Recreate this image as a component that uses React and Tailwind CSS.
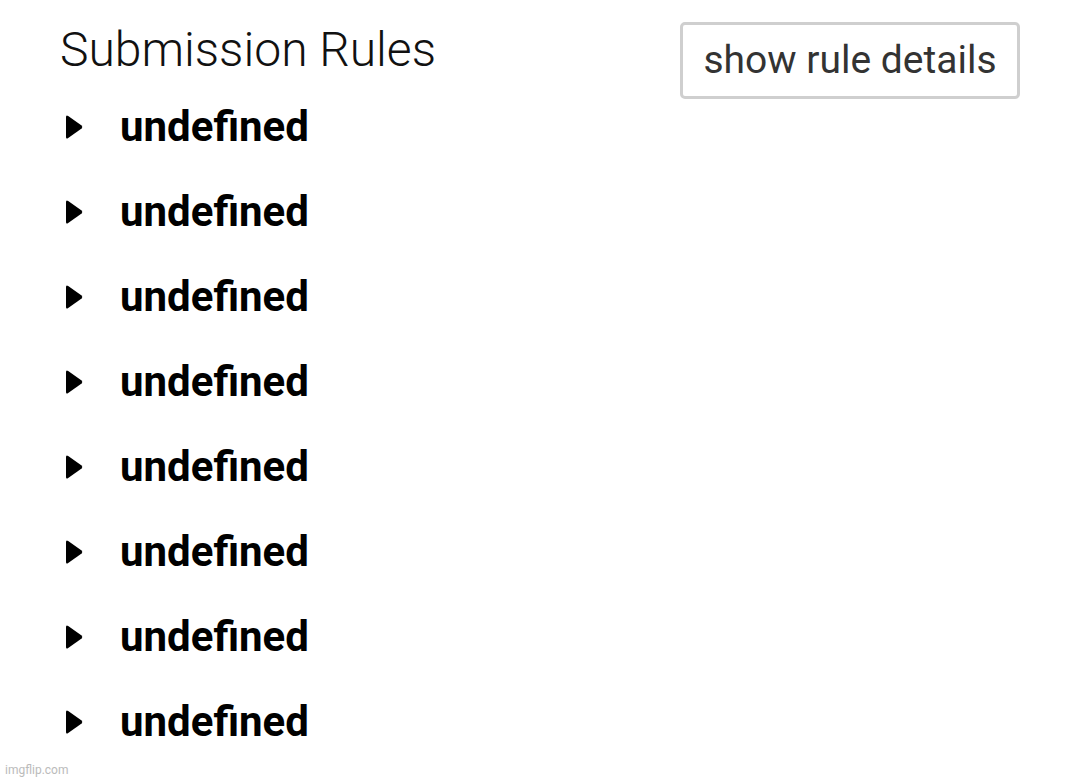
// Submission rules panel — a title, a "show rule details" toggle and a
// collapsed list of rules (each with a disclosure triangle).
const RULES = Array.from({ length: 8 }, (_, i) => ({ id: i, title: undefined }))

function Caret() {
  return (
    <svg width="18" height="26" viewBox="0 0 18 26" aria-hidden className="shrink-0">
      <path d="M1 3 Q1 0.6 3.2 2 L16.6 11.4 Q18 13 16.6 14.6 L3.2 24 Q1 25.4 1 23 Z" fill="#000" />
    </svg>
  )
}

export default function App() {
  return (
    <div
      className="relative h-[782px] w-[1080px] overflow-hidden bg-white"
      style={{ fontFamily: 'Roboto, "Liberation Sans", sans-serif' }}
    >
      <div className="flex items-start justify-between pl-[60px] pr-[60px] pt-[22px]">
        <h1 className="mt-[2px] text-[48px] font-light leading-[52px] text-[#111]">Submission Rules</h1>
        <button
          type="button"
          className="h-[77px] w-[340px] rounded-[5px] border-[3px] border-[#cfcfcf] bg-white text-[39px] text-[#333]"
        >
          show rule details
        </button>
      </div>

      <ul className="-mt-[15px] pl-[65px]">
        {RULES.map((r) => (
          <li key={r.id} className="flex h-[85px] items-center gap-[37px]">
            <Caret />
            <span className="text-[42px] font-bold text-black">{String(r.title)}</span>
          </li>
        ))}
      </ul>

      <span className="absolute bottom-[3px] left-[5px] text-[12px] text-[#bbb]">imgflip.com</span>
    </div>
  )
}
